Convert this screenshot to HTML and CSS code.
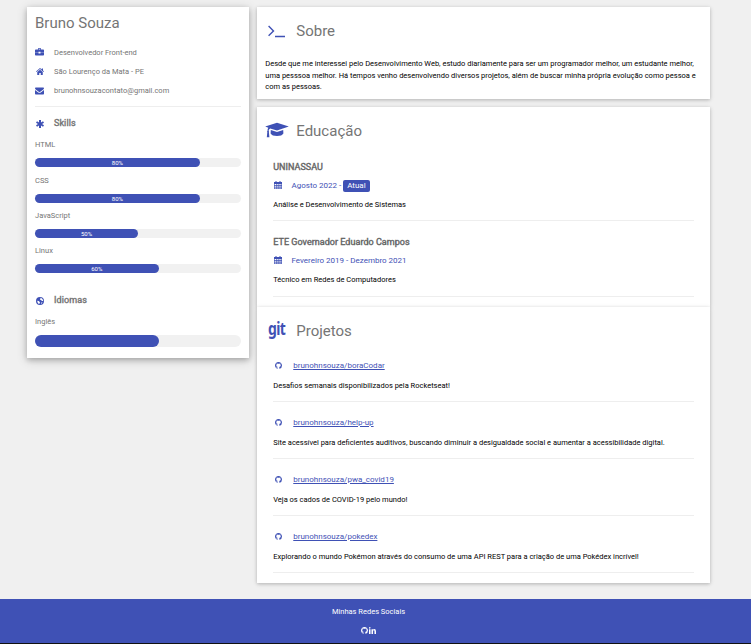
FILE: index.html
```html
<!DOCTYPE html>
<html lang="pt-BR">
<head>
<meta charset="utf-8">
<title>Bruno Souza</title>
<link rel="stylesheet" href="styles.css">
</head>
<body>
<svg class="sprite" aria-hidden="true">
<symbol id="github" viewBox="0 0 16 16"><path d="M8 0C3.58 0 0 3.58 0 8c0 3.54 2.29 6.53 5.47 7.59.4.07.55-.17.55-.38 0-.19-.01-.82-.01-1.49-2.01.37-2.53-.49-2.69-.94-.09-.23-.48-.94-.82-1.13-.28-.15-.68-.52-.01-.53.63-.01 1.08.58 1.23.82.72 1.21 1.87.87 2.33.66.07-.52.28-.87.51-1.07-1.78-.2-3.64-.89-3.64-3.95 0-.87.31-1.59.82-2.15-.08-.2-.36-1.02.08-2.12 0 0 .67-.21 2.2.82a7.6 7.6 0 0 1 4 0c1.53-1.04 2.2-.82 2.2-.82.44 1.1.16 1.92.08 2.12.51.56.82 1.27.82 2.15 0 3.07-1.87 3.75-3.65 3.95.29.25.54.73.54 1.48 0 1.07-.01 1.93-.01 2.2 0 .21.15.46.55.38A8 8 0 0 0 16 8c0-4.42-3.58-8-8-8z"/></symbol>
<symbol id="calendar" viewBox="0 0 16 16"><path fill-rule="evenodd" d="M0 2h3V0h2v2h6V0h2v2h3v14H0zM1.200 6v2.200H4V6zm4 0v2.200h2.400V6zm3.800 0v2.200h2.400V6zm3.600 0v2.200h2.200V6zM1.200 9.400v2.200H4V9.400zm4 0v2.200h2.400V9.400zm3.800 0v2.200h2.400V9.400zm3.600 0v2.200h2.200V9.400zM1.200 12.800v2H4v-2zm4 0v2h2.400v-2zm3.800 0v2h2.400v-2zm3.600 0v2h2.200v-2z"/></symbol>
</svg>
<main class="page">
  <aside class="card profile">
    <h1>Bruno Souza</h1>
    <p class="info"><svg class="icon case" viewBox="0 0 18 16"><path d="M6 3V1.500Q6 0 7.500 0h3Q12 0 12 1.500V3h4.500Q18 3 18 4.500V9h-7V7.500H7V9H0V4.500Q0 3 1.500 3zm1.500 0h3V1.500h-3zM0 9.700h7v1.500h4V9.700h7v3.800q0 1.500-1.500 1.500h-15Q0 15 0 13.500z"/></svg>Desenvolvedor Front-end</p>
    <p class="info"><svg class="icon home" viewBox="0 0 16 14"><path d="M8 0l3.500 3V1H14v4.200L16 7l-1 1-7-6-7 6-1-1zM8 3.300l5.500 4.700v6h-4v-4h-3v4h-4V8z"/></svg>São Lourenço da Mata - PE</p>
    <p class="info"><svg class="icon" viewBox="0 0 18 14"><path d="M1.500 0h15Q18 0 18 1.500 18 3 16 4.500L10.500 8.500Q9 9.500 7.500 8.500L2 4.500Q0 3 0 1.500 0 0 1.500 0zM0 5l6.500 4.800q2.500 1.600 5 0L18 5v7.500q0 1.500-1.500 1.500h-15Q0 14 0 12.500z"/></svg>brunohnsouzacontato@gmail.com</p>
    <hr>
    <h2 class="skills"><svg class="icon star" viewBox="0 0 16 16"><path d="M6 0h4v4.800l4-2.400 2 3.200L12 8l4 2.400-2 3.200-4-2.400V16H6v-4.800l-4 2.400-2-3.200L4 8 0 5.600l2-3.200 4 2.400z"/></svg>Skills</h2>
    <p class="label">HTML</p>
    <div class="bar"><div class="fill" style="width:80%">80%</div></div>
    <p class="label">CSS</p>
    <div class="bar"><div class="fill" style="width:80%">80%</div></div>
    <p class="label short">JavaScript</p>
    <div class="bar"><div class="fill" style="width:50%">50%</div></div>
    <p class="label short">Linux</p>
    <div class="bar"><div class="fill" style="width:60%">60%</div></div>
    <h2 class="languages"><svg class="icon star" viewBox="0 0 16 16"><path fill-rule="evenodd" d="M8 0a8 8 0 1 0 0 16A8 8 0 0 0 8 0zM9.500 1.500L13 4l1.500 4-2.500 0-2-2-2-.5.500-2zM2.500 7.500l3 .5 2.500 2.500-1.500 3.500-1.500-.5-2-3zM11 10.500l2 .5-2 2.500-1-.5z"/></svg>Idiomas</h2>
    <p class="label">Inglês</p>
    <div class="bar tall"><div class="fill" style="width:60%"></div></div>
  </aside>
  <div class="content">
    <section class="card about">
      <h2 class="title"><svg viewBox="0 0 24 20"><path d="M3.600 4l4.900 4.900-4.900 4.900M10 14.500h10" fill="none" stroke="#3f51b5" stroke-width="1.400"/></svg>Sobre</h2>
      <p>Desde que me interessei pelo Desenvolvimento Web, estudo diariamente para ser um programador melhor, um estudante melhor,<br>uma pesssoa melhor. Há tempos venho desenvolvendo diversos projetos, além de buscar minha própria evolução como pessoa e<br>com as pessoas.</p>
    </section>
    <section class="card education">
      <h2 class="title"><svg viewBox="0 0 24 20"><path d="M12 .7l11.800 3.900L12 8.600 5.200 6.400q-1.500.6-1.600 2.500.8.500.3 1.400l.5 5H1.800l.5-5q-.6-.9.200-1.500 0-1.800.8-3L.2 4.600zM5.800 8l6.200 2 6.200-2 .2 3.500q-1.400 2.500-6.400 2.500t-6.400-2.500z"/></svg>Educação</h2>
      <article>
        <h3>UNINASSAU</h3>
        <p class="date"><svg class="icon"><use href="#calendar"/></svg>Agosto 2022 -&nbsp;<span class="tag">Atual</span></p>
        <p class="desc">Análise e Desenvolvimento de Sistemas</p>
        <hr>
      </article>
      <article>
        <h3>ETE Governador Eduardo Campos</h3>
        <p class="date"><svg class="icon"><use href="#calendar"/></svg>Fevereiro 2019 - Dezembro 2021</p>
        <p class="desc">Técnico em Redes de Computadores</p>
        <hr>
      </article>
    </section>
    <section class="card projects">
      <h2 class="title"><span class="git">git</span>Projetos</h2>
      <article>
        <p class="repo"><svg class="icon"><use href="#github"/></svg><a href="#">brunohnsouza/boraCodar</a></p>
        <p class="desc">Desafios semanais disponibilizados pela Rocketseat!</p>
        <hr>
      </article>
      <article>
        <p class="repo"><svg class="icon"><use href="#github"/></svg><a href="#">brunohnsouza/help-up</a></p>
        <p class="desc">Site acessível para deficientes auditivos, buscando diminuir a desigualdade social e aumentar a acessibilidade digital.</p>
        <hr>
      </article>
      <article>
        <p class="repo"><svg class="icon"><use href="#github"/></svg><a href="#">brunohnsouza/pwa_covid19</a></p>
        <p class="desc">Veja os cados de COVID-19 pelo mundo!</p>
        <hr>
      </article>
      <article>
        <p class="repo"><svg class="icon"><use href="#github"/></svg><a href="#">brunohnsouza/pokedex</a></p>
        <p class="desc">Explorando o mundo Pokémon através do consumo de uma API REST para a criação de uma Pokédex incrível!</p>
        <hr>
      </article>
    </section>
  </div>
</main>
<footer>
  <p>Minhas Redes Sociais</p>
  <div class="social">
    <svg viewBox="0 0 16 16"><use href="#github"/></svg>
    <svg viewBox="0 0 16 16"><path d="M0 5h3.500v11H0zM1.750 0a1.900 1.900 0 1 1 0 3.800 1.900 1.900 0 0 1 0-3.800zM5.700 5H9v1.500Q10 4.700 12.200 4.700 16 4.700 16 9.500V16h-3.500v-6q0-2.400-1.700-2.400Q9.200 7.600 9.200 10v6H5.700z"/></svg>
  </div>
</footer>
</body>
</html>
```
FILE: styles.css
```css
* { box-sizing: border-box; }
body {
  margin: 0;
  height: 644px;
  overflow: hidden;
  background: #f0f0f0;
  font: 7.5px/11.25px Roboto, sans-serif;
  color: #000;
}
h1, h2, h3, p { margin: 0; font-weight: 400; }
svg { fill: #3f51b5; flex: none; }
.sprite { display: none; }
.page {
  display: flex;
  gap: 8px;
  align-items: flex-start;
  height: 599px;
  padding: 7px 41px 0 27px;
}
.card {
  background: #fff;
  box-shadow: 0 1px 3px rgba(0,0,0,.16), 0 1px 5px rgba(0,0,0,.12);
}
.profile {
  width: 222px;
  height: 351px;
  padding: 0 8px;
  color: #757575;
  box-shadow: 0 2px 5px rgba(0,0,0,.2), 0 2px 10px rgba(0,0,0,.19);
}
h1 { height: 36px; font-size: 15px; line-height: 32px; }
.info { display: flex; align-items: center; height: 19px; }
.icon { width: 9px; height: 8px; margin-right: 10px; }
.case { margin-top: -2px; }
.home { width: 8px; height: 7px; margin: 0 10px 0 1px; }
.star { width: 8px; height: 8px; margin: -1px 10px 0 1px; }
hr { margin: 0; border: 0; border-top: 1px solid #eee; }
.profile hr { margin-top: 6px; }
.profile h2 {
  display: flex;
  align-items: center;
  height: 12px;
  font-size: 9px;
  letter-spacing: .1px;
  -webkit-text-stroke: .4px #757575;
}
.profile .skills { margin: 11px 0 9px; }
.profile .languages { margin: 22px 0 9px; }
.label { height: 19px; line-height: 11px; }
.label.short { height: 18px; line-height: 10px; }
.bar { height: 9px; border-radius: 8px; background: #f1f1f1; margin-bottom: 8px; }
.fill {
  height: 100%;
  border-radius: 8px;
  background: #3f51b5;
  color: #fff;
  font-size: 6px;
  line-height: 9px;
  text-align: center;
}
.bar.tall { height: 12px; }
.content { width: 453px; }
.about { height: 92px; margin-bottom: 8px; padding: 0 8px; }
.title {
  display: flex;
  align-items: center;
  height: 49px;
  padding-top: 1px;
  font-size: 15px;
  color: #757575;
}
.title svg { width: 24px; height: 20px; margin-right: 7.250px; }
.about p { padding: 2px 0 0 .25px; line-height: 11.500px; white-space: nowrap; }
.education { height: 200px; padding: 0 8px; }
.projects { height: 276px; padding: 0 8px; }
article { padding: 0 8px 0 8.250px; }
.education article { height: 75px; padding-top: 5px; }
.education article + article { height: 76px; }
.education article + article .desc { height: 23px; }
h3 {
  height: 12px;
  font-size: 9px;
  line-height: 12px;
  letter-spacing: .03px;
  color: #666;
  -webkit-text-stroke: .4px #666;
}
.date { display: flex; align-items: center; height: 25px; font-size: 8px; color: #3f51b5; }
.date .icon { width: 8px; margin: -1px 9.250px 0 1px; }
.tag { padding: 0 4px; border-radius: 2px; background: #3f51b5; color: #fff; line-height: 12px; }
.desc { height: 22px; line-height: 13px; white-space: nowrap; }
.git {
  width: 31.250px;
  padding: 0 0 7px 3px;
  font: 700 17px/20px "Noto Sans", sans-serif;
  letter-spacing: -.8px;
  color: #3f51b5;
  transform: scaleX(.82);
  transform-origin: 3px 0;
}
.projects article { height: 57px; padding-top: 4px; }
.projects .title { margin-bottom: -1px; }
.repo { display: flex; align-items: center; height: 13px; margin-bottom: 6px; font-size: 8px; }
.repo .icon { width: 7px; height: 7px; margin: 0 11.500px 0 1.500px; }
.repo a { color: #3f51b5; }
.projects .desc { height: 23px; line-height: 15px; }
footer {
  height: 45px;
  padding-top: 7px;
  background: #3f51b5;
  border-bottom: 1px solid #111;
  color: #fff;
  text-align: center;
  padding-right: 14px;
}
.social { display: flex; justify-content: center; gap: 1px; padding-top: 10px; }
.social svg { width: 7px; height: 7px; fill: #fff; }
```
